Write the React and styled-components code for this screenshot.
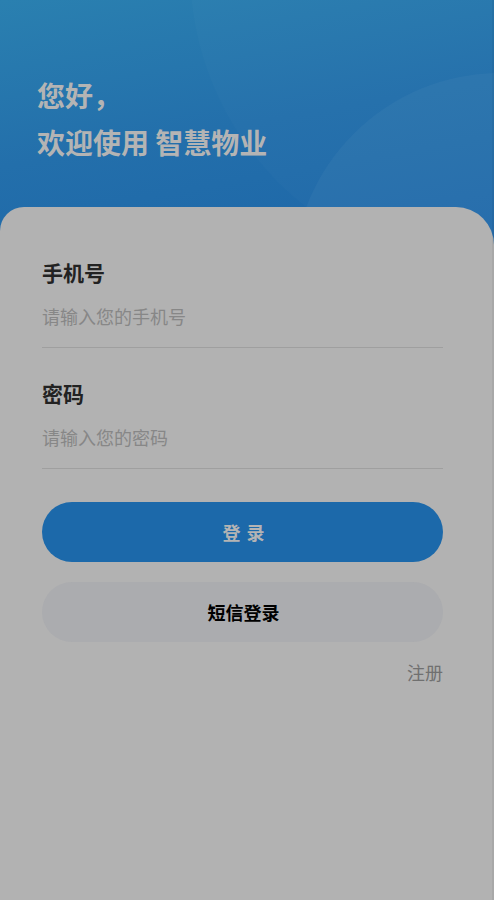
import styled, { createGlobalStyle } from "styled-components";

const GlobalStyle = createGlobalStyle`
  html, body {
    margin: 0;
    padding: 0;
    background: #b2b2b2;
  }
  body {
    font-family: "Noto Sans CJK SC", "Noto Sans", sans-serif;
  }
`;

const Page = styled.div`
  position: relative;
  width: 494px;
  min-height: 900px;
  display: flex;
  flex-direction: column;
  background: #b2b2b2;
  overflow: hidden;

  &::after {
    content: "";
    position: absolute;
    top: 0;
    right: 0;
    width: 2px;
    height: 100%;
    background: rgba(0, 0, 0, 0.05);
  }
`;

const Header = styled.div`
  position: relative;
  height: 247px;
  margin-bottom: -40px;
  padding: 72px 0 0 37px;
  box-sizing: border-box;
  background: linear-gradient(170deg, #2a80b0 0%, #236fab 50%, #1d66a8 100%);
  overflow: hidden;
`;

const Bubble = styled.div`
  position: absolute;
  border-radius: 50%;
  background: rgba(255, 255, 255, ${(p) => p.$alpha});
  left: ${(p) => p.$x}px;
  top: ${(p) => p.$y}px;
  width: ${(p) => p.$r * 2}px;
  height: ${(p) => p.$r * 2}px;
`;

const Greeting = styled.h1`
  position: relative;
  margin: 0;
  font-size: 28px;
  line-height: 47px;
  font-weight: 700;
  color: #b4b4b4;
`;

const Card = styled.div`
  position: relative;
  flex: 1;
  background: #b2b2b2;
  border-radius: 24px 38px 0 0;
  padding: 55px 51px 40px 42px;
  display: flex;
  flex-direction: column;
`;

const Label = styled.div`
  font-size: 21px;
  line-height: 21px;
  font-weight: 700;
  color: #222222;
  margin-top: ${(p) => p.$top || 0}px;
`;

const Input = styled.input`
  display: block;
  width: 100%;
  box-sizing: border-box;
  margin-top: 24px;
  height: 41px;
  padding: 0 0 22px;
  line-height: 18px;
  font-size: 18px;
  font-family: inherit;
  color: #333;
  background: transparent;
  border: none;
  border-bottom: 1px solid #9f9f9f;
  outline: none;

  &::placeholder {
    color: #878787;
  }
`;

const Button = styled.button`
  display: flex;
  align-items: center;
  justify-content: center;
  height: 60px;
  width: 100%;
  margin-top: ${(p) => p.$top}px;
  border: none;
  border-radius: 30px;
  font-family: inherit;
  font-size: 18px;
  font-weight: 700;
  letter-spacing: ${(p) => (p.$primary ? "6px" : "0")};
  padding: 0 0 0 ${(p) => (p.$primary ? "8px" : "2px")};
  background: ${(p) => (p.$primary ? "#1c69aa" : "#abacaf")};
  color: ${(p) => (p.$primary ? "#b4b4b4" : "#000000")};
  cursor: pointer;
`;

const Register = styled.div`
  align-self: flex-end;
  margin-top: 21px;
  font-size: 18px;
  line-height: 18px;
  color: #707070;
`;

export default function App() {
  return (
    <>
      <GlobalStyle />
      <Page>
        <Header>
          <Bubble $x={190} $y={-330} $r={300} $alpha={0.015} />
          <Bubble $x={293} $y={73} $r={207} $alpha={0.035} />
          <Greeting>
            您好，
            <br />
            欢迎使用 智慧物业
          </Greeting>
        </Header>
        <Card>
          <Label>手机号</Label>
          <Input placeholder="请输入您的手机号" />
          <Label $top={35}>密码</Label>
          <Input type="password" placeholder="请输入您的密码" />
          <Button $primary $top={33}>登录</Button>
          <Button $top={20}>短信登录</Button>
          <Register>注册</Register>
        </Card>
      </Page>
    </>
  );
}
